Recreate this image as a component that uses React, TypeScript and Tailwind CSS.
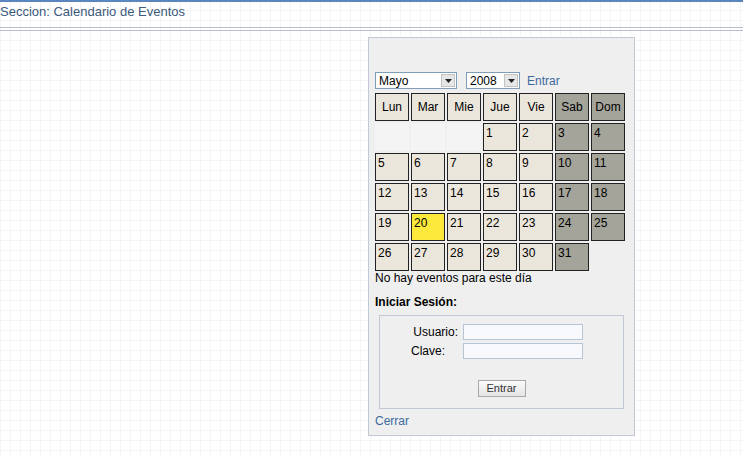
import { ReactNode } from 'react';

const head = ['Lun', 'Mar', 'Mie', 'Jue', 'Vie', 'Sab', 'Dom'];

// May 2008 starts on Thursday
const weeks: (number | null)[][] = [
  [null, null, null, 1, 2, 3, 4],
  [5, 6, 7, 8, 9, 10, 11],
  [12, 13, 14, 15, 16, 17, 18],
  [19, 20, 21, 22, 23, 24, 25],
  [26, 27, 28, 29, 30, 31, null]
];

function FakeSelect({ value, width }: { value: string; width: string }) {
  return (
    <div
      className={`flex h-[17px] items-center border border-[#7f9db9] bg-white pl-[3px] ${width}`}
    >
      <span className="flex-1 text-[12px] leading-none text-black">{value}</span>
      <span className="mr-[1px] flex h-[13px] w-[14px] items-center justify-center border border-[#c3c3c3] bg-[#e6e6e6]">
        <svg width="7" height="4" viewBox="0 0 7 4">
          <path d="M0 0h7L3.5 4z" fill="#222" />
        </svg>
      </span>
    </div>
  );
}

function Cell({ children, tone }: { children?: ReactNode; tone: string }) {
  return (
    <div
      className={`h-[28px] w-[34px] border border-[#222] px-[2px] pt-[2px] text-[12px] leading-[14px] text-black ${tone}`}
    >
      {children}
    </div>
  );
}

export default function App() {
  return (
    <div className="min-h-[456px] w-[743px] bg-white bg-[linear-gradient(#f2f4f8_1px,transparent_1px),linear-gradient(90deg,#f2f4f8_1px,transparent_1px)] bg-[size:10px_10px] font-['Liberation_Sans',Arial,sans-serif]">
      <div className="h-[2px] bg-[#5a86c0]" />
      <div className="pt-[2px] text-[13px] leading-[16px] text-[#3c5a7c]">
        Seccion: Calendario de Eventos
      </div>
      <div className="mt-[7px] h-[4px] border-y border-[#b8bfcc]" />

      <div className="ml-[368px] mt-[6px] w-[267px] border border-[#c2c9d6] bg-[#efefef] px-[6px] pb-[7px] pt-[34px]">
        <div className="flex items-center">
          <FakeSelect value="Mayo" width="w-[82px]" />
          <div className="ml-[9px]">
            <FakeSelect value="2008" width="w-[54px]" />
          </div>
          <span className="ml-[7px] text-[12px] leading-none text-[#3d6a9c]">Entrar</span>
        </div>

        <div className="mt-[4px] grid w-fit grid-cols-[repeat(7,34px)] gap-[2px]">
          {head.map((h, i) => (
            <div
              key={h}
              className={`flex h-[28px] items-center justify-center border border-[#222] text-[12px] text-black ${
                i >= 5 ? 'bg-[#a4a49a]' : 'bg-[#ebe6dc]'
              }`}
            >
              {h}
            </div>
          ))}
          {weeks.flat().map((d, i) => {
            if (d === null) {
              return (
                <div
                  key={i}
                  className={`h-[28px] w-[34px] ${i < 7 ? 'bg-[#f4f4f4]' : ''}`}
                />
              );
            }
            const col = i % 7;
            const tone =
              d === 20 ? 'bg-[#fde93c]' : col >= 5 ? 'bg-[#a4a49a]' : 'bg-[#ebe6dc]';
            return (
              <Cell key={i} tone={tone}>
                {d}
              </Cell>
            );
          })}
        </div>
        <div className="text-[12px] leading-[14px] text-black">No hay eventos para este día</div>

        <div className="mt-[10px] text-[12px] font-bold leading-[14px] text-black">
          Iniciar Sesión:
        </div>
        <div className="ml-[4px] mt-[6px] w-[245px] border border-[#c2c9d6] pb-[11px] pt-[8px]">
          <div className="flex flex-col gap-[3px]">
            <div className="flex h-[16px] items-center">
              <span className="w-[78px] text-right text-[12px] leading-[16px] text-black">
                Usuario:
              </span>
              <div className="ml-[5px] h-[16px] w-[120px] border border-[#b6c4d6] bg-[#f7f9fc]" />
            </div>
            <div className="flex h-[16px] items-center">
              <span className="w-[78px] pl-[31px] text-[12px] leading-[16px] text-black">
                Clave:
              </span>
              <div className="ml-[5px] h-[16px] w-[120px] border border-[#b6c4d6] bg-[#f7f9fc]" />
            </div>
          </div>
          <div className="mt-[21px] flex justify-center">
            <button className="h-[17px] w-[48px] border border-[#a8a8a8] bg-gradient-to-b from-[#fbfbfb] to-[#e4e4e4] text-[11px] leading-none text-[#333]">
              Entrar
            </button>
          </div>
        </div>
        <div className="mt-[5px] text-[12px] leading-[14px] text-[#3d6a9c]">Cerrar</div>
      </div>
    </div>
  );
}
